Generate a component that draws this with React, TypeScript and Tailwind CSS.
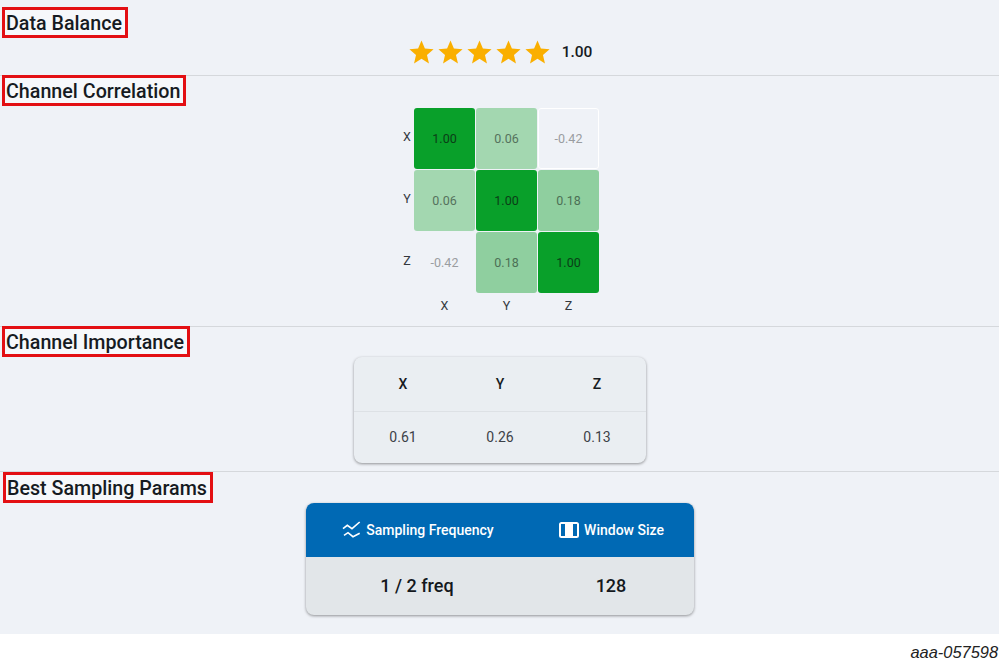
const cells = [
  ["1.00", "0.06", "-0.42"],
  ["0.06", "1.00", "0.18"],
  ["-0.42", "0.18", "1.00"],
];

const labels = ["X", "Y", "Z"];

function cellClass(value: string) {
  if (value === "1.00") return "bg-[#09a02a] text-[#0b3d17]";
  if (value === "0.06") return "bg-[#a3d7b0] text-[#55725d]";
  if (value === "0.18") return "bg-[#8fcf9f] text-[#4c6f55]";
  return "text-[#9a9da1]";
}

function Heading({ title }: { title: string }) {
  return (
    <div className="ml-[2px] h-[31px] w-fit border-[3px] border-[#e30f13] bg-[#f6f8fb] pt-px pr-[3px] pl-[1px] text-[19.7px] leading-[25px] font-medium text-[#161b22]">
      {title}
    </div>
  );
}

function Star() {
  return (
    <svg viewBox="0 0 24 24" className="h-[29px] w-[29px] fill-[#faaf00]">
      <path d="M12 17.27 18.18 21l-1.64-7.03L22 9.24l-7.19-.61L12 2 9.19 8.63 2 9.24l5.46 4.73L5.82 21z" />
    </svg>
  );
}

function WaveIcon() {
  return (
    <svg viewBox="0 0 20 20" className="h-[20px] w-[20px] fill-none stroke-white stroke-[1.6]">
      <path d="M1 8.700 5.300 5.300 10 8.700 17.700 2" />
      <path d="M2 15.300 6 12.700 11 16.700 17.700 13.300" />
    </svg>
  );
}

function WindowIcon() {
  return (
    <svg viewBox="0 0 20 16" className="h-[16px] w-[20px]">
      <rect x="1" y="1" width="18" height="14" rx="1.500" className="fill-white stroke-white stroke-2" />
      <rect x="2" y="2" width="4" height="12" className="fill-[#0069b4]" />
      <rect x="14" y="2" width="4" height="12" className="fill-[#0069b4]" />
    </svg>
  );
}

export default function App() {
  return (
    <div className="flex h-[663px] w-[999px] flex-col bg-white font-['Roboto',sans-serif]">
      <main className="h-[634px] bg-[#eff2f7]">
        <section className="h-[75px] pt-[7px]">
          <Heading title="Data Balance" />
          <div className="flex items-center justify-center">
            <div className="flex">
              {[1, 2, 3, 4, 5].map((i) => (
                <Star key={i} />
              ))}
            </div>
            <span className="ml-[10px] text-[15.5px] leading-[29px] font-medium text-[#161b22]">1.00</span>
          </div>
        </section>

        <section className="h-[251px] border-t border-[#d5d8dc]">
          <div className="-mt-px">
            <Heading title="Channel Correlation" />
          </div>
          <div className="flex justify-center">
            <div className="mt-[2px] mr-[5px] grid grid-cols-[17px_61px_61px_61px] grid-rows-[61px_61px_61px_auto] gap-px">
              {cells.map((row, r) => (
                <div key={r} className="contents">
                  <div className="pt-[21px] pl-[6px] text-center text-[12.500px] leading-[16px] text-[#33383e]">{labels[r]}</div>
                  {row.map((value, c) => (
                    <div
                      key={c}
                      className={`flex items-center justify-center rounded-[3px] pt-[2px] pl-px text-[12.500px] ${cellClass(value)} ${r === 0 && c === 2 ? "border border-white" : ""}`}
                    >
                      {value}
                    </div>
                  ))}
                </div>
              ))}
              <div />
              {labels.map((label) => (
                <div key={label} className="pt-[4px] pl-px text-center text-[12.500px] leading-[16px] text-[#33383e]">
                  {label}
                </div>
              ))}
            </div>
          </div>
        </section>

        <section className="h-[145px] border-t border-[#d5d8dc]">
          <div className="-mt-px">
            <Heading title="Channel Importance" />
          </div>
          <div className="flex justify-center">
            <div className="w-[292px] rounded-[8px] bg-[#eaeef2] shadow-[0_1px_3px_rgba(0,0,0,0.4)]">
              <div className="grid h-[55px] grid-cols-3 items-center border-b border-[#dde1e5] pl-px text-center text-[14px] font-medium text-[#161b22]">
                {labels.map((label) => (
                  <span key={label}>{label}</span>
                ))}
              </div>
              <div className="grid h-[51px] grid-cols-3 items-center pl-px text-center text-[14px] text-[#3d4148]">
                <span>0.61</span>
                <span>0.26</span>
                <span>0.13</span>
              </div>
            </div>
          </div>
        </section>

        <section className="h-[163px] border-t border-[#d5d8dc]">
          <div className="ml-px">
            <Heading title="Best Sampling Params" />
          </div>
          <div className="flex justify-center">
            <div className="w-[388px] overflow-hidden rounded-[8px] bg-[#e2e6e9] shadow-[0_1px_3px_rgba(0,0,0,0.4)]">
              <div className="grid h-[54px] grid-cols-[223px_165px] items-center bg-[#0069b4] text-[14px] font-medium text-white">
                <div className="flex items-center justify-center gap-[4px] pl-[2px]">
                  <WaveIcon />
                  <span>Sampling Frequency</span>
                </div>
                <div className="flex items-center justify-center gap-[5px] pl-px">
                  <WindowIcon />
                  <span>Window Size</span>
                </div>
              </div>
              <div className="grid h-[58px] grid-cols-[223px_165px] items-center pb-[2px] text-center text-[18px] font-medium text-[#14181d]">
                <span>1 / 2 freq</span>
                <span>128</span>
              </div>
            </div>
          </div>
        </section>
      </main>
      <div className="pt-[9px] pr-[1px] text-right font-['Liberation_Sans',sans-serif] text-[16.400px] leading-[18px] text-[#222] italic">
        aaa-057598
      </div>
    </div>
  );
}
